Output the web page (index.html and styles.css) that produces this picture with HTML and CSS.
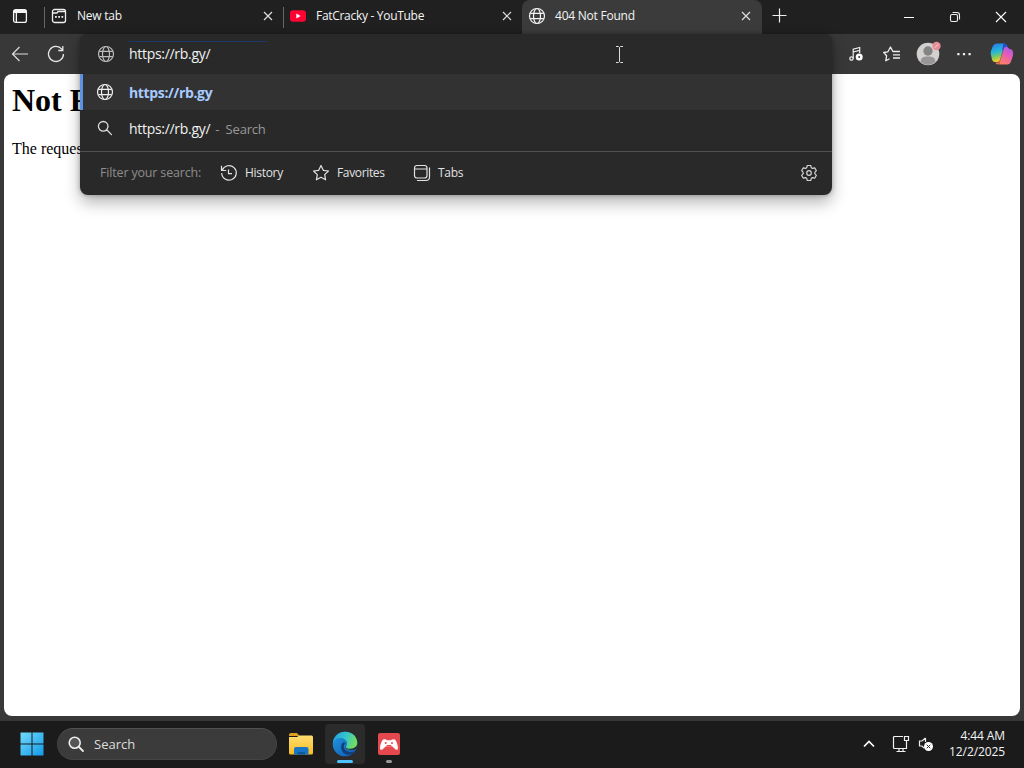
FILE: index.html
```html
<!DOCTYPE html>
<html lang="en">
<head>
<meta charset="utf-8">
<title>404 Not Found</title>
<link rel="stylesheet" href="styles.css">
</head>
<body>
<svg class="defs" width="0" height="0">
  <defs>
    <linearGradient id="win" x1="0" y1="0" x2="1" y2="1"><stop offset="0" stop-color="#72dafa"/><stop offset="1" stop-color="#129ae9"/></linearGradient>
    <linearGradient id="folder" x1="0" y1="0" x2="0" y2="1"><stop offset="0" stop-color="#ffdd70"/><stop offset="1" stop-color="#f6bd24"/></linearGradient>
    <linearGradient id="edgeTop" x1="0" y1="0" x2="1" y2=".3"><stop offset="0" stop-color="#219fda"/><stop offset=".55" stop-color="#35c5ce"/><stop offset="1" stop-color="#6ddd63"/></linearGradient>
    <linearGradient id="edgeLow" x1="0" y1="0" x2="1" y2="1"><stop offset="0" stop-color="#239ce4"/><stop offset="1" stop-color="#0d56ad"/></linearGradient>
    <linearGradient id="copA" x1="0" y1="0" x2=".2" y2="1"><stop offset="0" stop-color="#2579f0"/><stop offset=".5" stop-color="#27b7d6"/><stop offset=".75" stop-color="#79cb62"/><stop offset="1" stop-color="#f1cb28"/></linearGradient>
    <linearGradient id="copB" x1=".7" y1="0" x2=".3" y2="1"><stop offset="0" stop-color="#a65be9"/><stop offset=".45" stop-color="#e65bb8"/><stop offset="1" stop-color="#ff8061"/></linearGradient>
    <symbol id="globe" viewBox="0 0 18 18"><g fill="none" stroke="currentColor" stroke-width="1.2"><circle cx="9" cy="9" r="7.5"/><ellipse cx="9" cy="9" rx="3.5" ry="7.5"/><path d="M2.3 6.3h13.4M2.3 11.7h13.4"/></g></symbol>
    <symbol id="close" viewBox="0 0 10 10"><path d="m1 1 8 8M9 1 1 9" fill="none" stroke="currentColor" stroke-width="1.2"/></symbol>
    <symbol id="search" viewBox="0 0 16 16"><path d="M11 6.3a4.8 4.8 0 1 1-9.6 0 4.8 4.8 0 0 1 9.6 0ZM9.7 9.8l4.8 4.8" fill="none" stroke="currentColor" stroke-width="1.3" stroke-linecap="round"/></symbol>
  </defs>
</svg>

<header class="tab-strip">
  <button class="tab-actions" aria-label="Tab actions"><svg width="16" height="16" viewBox="0 0 16 16"><rect x="1.600" y="1.600" width="12.800" height="12.800" rx="2" fill="none" stroke="#f4f4f4" stroke-width="1.300"/><path d="M2 2h12v3H5v9H3.700V5H2z" fill="#f4f4f4"/></svg></button>
  <div class="tab ruled first">
    <svg class="tab-icon" viewBox="0 0 18 18"><g fill="none" stroke="#eee" stroke-width="1.300"><rect x="2.500" y="2.500" width="13" height="13" rx="2"/><path d="M2.500 6H7l1-1.500h7"/></g><path d="M5 9h1.800v1.800H5zm3.200 0H10v1.800H8.200zm3.200 0h1.800v1.800h-1.800z" fill="#eee"/></svg>
    <span class="tab-title t-new">New tab</span><svg class="tab-close"><use href="#close"/></svg>
  </div>
  <div class="tab ruled first">
    <svg class="tab-icon" viewBox="0 0 18 18"><rect x="1" y="3.200" width="16" height="11.600" rx="3" fill="#ff0334"/><path d="m7.300 6.500 4.400 2.500-4.400 2.500z" fill="#fff"/></svg>
    <span class="tab-title t-yt">FatCracky - YouTube</span><svg class="tab-close"><use href="#close"/></svg>
  </div>
  <div class="tab active">
    <svg class="tab-icon"><use href="#globe"/></svg>
    <span class="tab-title t-404">404 Not Found</span><svg class="tab-close"><use href="#close"/></svg>
  </div>
  <button class="new-tab" aria-label="New tab"><svg width="15" height="15" viewBox="0 0 15 15"><path d="M7.500.5v14M.5 7.500h14" stroke="#eee" stroke-width="1.200"/></svg></button>
  <div class="window-controls">
    <button aria-label="Minimize"><svg width="12" height="12" viewBox="0 0 12 12"><path d="M1 6.500h10" stroke="#fff"/></svg></button>
    <button aria-label="Restore"><svg width="12" height="12" viewBox="0 0 12 12"><g fill="none" stroke="#eee" stroke-width="1.100"><rect x="1.500" y="3.500" width="7" height="7" rx="1.500"/><path d="M3.500 1.500H8q2.500 0 2.500 2.500v4.500"/></g></svg></button>
    <button aria-label="Close"><svg width="12" height="12" viewBox="0 0 12 12"><path d="m1 1 10 10M11 1 1 11" stroke="#fff" stroke-width="1.100"/></svg></button>
  </div>
</header>

<nav class="toolbar">
  <button aria-label="Back"><svg width="18" height="18" viewBox="0 0 18 18"><path d="M17 9H1.500m7-7L1.500 9l7 7" fill="none" stroke="#ddd" stroke-width="1.200"/></svg></button>
  <button aria-label="Reload"><svg width="18" height="18" viewBox="0 0 18 18"><path d="M16.500 9A7.500 7.500 0 1 1 14.800 4.200L15.500 5M15.800 1v4.500h-4.500" fill="none" stroke="#e5e5e5" stroke-width="1.300"/></svg></button>
  <div class="toolbar-end">
    <button aria-label="Media"><svg width="16" height="16" viewBox="0 0 16 16"><g fill="none" stroke="#eee" stroke-width="1.200"><path d="M5.200 12.500V3.200l6.500-1.700V7M5.200 6l6.500-1.700"/><circle cx="3.500" cy="12.500" r="1.700"/></g><circle cx="11.200" cy="11" r="3.500" fill="#fff"/><circle cx="11.200" cy="11" r="1" fill="#383838"/></svg></button>
    <button aria-label="Favorites"><svg width="18" height="18" viewBox="0 0 18 18"><g fill="none" stroke="#eee" stroke-width="1.300" stroke-linejoin="round"><path d="m6.500 13.700-3.700 2 .8-4.900L.7 7.500l4.200-.7L7.500 2l2.400 4.500h7M10 9.800h7M10 13h7"/></g></svg></button>
    <button aria-label="Profile"><svg width="26" height="26" viewBox="0 0 26 26"><circle cx="13" cy="13" r="11.300" fill="#d3d1d0"/><circle cx="13" cy="10" r="4.700" fill="#858383"/><path d="M5.700 21c.2-5 2.600-5.500 7.300-5.500s7.100.5 7.300 5.500Q13 27 5.700 21Z" fill="#989696"/><circle cx="21.500" cy="5" r="4.200" fill="#e78d95"/><path d="m19.800 6.700 3.400-3.400" stroke="#ffd5d7"/></svg></button>
    <button aria-label="Settings and more"><svg width="16" height="16" viewBox="0 0 16 16"><path d="M1.300 7h2.200v2.200H1.300zm5.600 0h2.200v2.200H6.900zm5.600 0h2.200v2.200h-2.200z" fill="#eee"/></svg></button>
    <button aria-label="Copilot"><svg width="24" height="24" viewBox="0 0 24 24"><path d="M7 1.500h8L10 18q-.6 2-2.500 2H4.800Q2.800 20 2 17.500L1 13Q.4 11 1 9l1.700-4.500Q4 1.500 7 1.500Z" fill="url(#copA)"/><path d="M13 1.500h1.500q2.500 0 3 2.500l.8 3h-4q-1.500 0-2 1.500l-.6 1.500L13 4Z" fill="#244fc7"/><path d="M17 22.500H9L14 6q.6-1.500 2.500-1.500l3 2.500q3 .2 3.500 3 .4 2-.2 4L21 19.500q-1 3-4 3Z" fill="url(#copB)"/><path d="M12 13 9.500 21q-.7 1.500-2.500 1.500-1 0-1.500-2h2q1.500 0 2-1.500z" fill="#ed725c"/></svg></button>
  </div>
</nav>

<main class="page">
  <h1>Not Found</h1>
  <p>The requested URL was not found on this server.</p>
</main>

<footer class="taskbar">
  <button class="start" aria-label="Start"><svg width="24" height="24" viewBox="0 0 24 24"><path d="M.5.500h11v11H.5zm12 0h11v11h-11zM.5 12.500h11v11H.5zm12 0h11v11h-11z" fill="url(#win)"/></svg></button>
  <div class="task-search"><svg width="18" height="18" viewBox="0 0 18 18"><circle cx="7.700" cy="7.700" r="5.500" fill="#555" stroke="#eee" stroke-width="1.600"/><path d="m12 12 4 4" stroke="#eee" stroke-width="1.800" stroke-linecap="round"/></svg><span>Search</span></div>
  <div class="apps">
    <div class="app"><svg width="26" height="24" viewBox="0 0 26 24"><path d="M1 3q0-2 2-2h6l2.500 3H1z" fill="#dba020"/><path d="M1 5h8l2-1.500h12.500Q25 3.500 25 5v16q0 1.500-1.500 1.500h-21Q1 22.500 1 21z" fill="url(#folder)"/><path d="M6 22.500V17q0-2 2-2h10.500q2 0 2 2v5.500z" fill="#1875c5"/><path d="M9.500 22.500V20h7.500v2.500z" fill="#0b599b"/></svg></div>
    <div class="app selected"><svg width="26" height="26" viewBox="0 0 26 26"><circle cx="13" cy="13" r="12.300" fill="url(#edgeLow)"/><path d="M1 12C2 5 7 .7 13 .7c7.500 0 12.300 5.300 12.300 11 0 4.500-3.500 7-7.200 7-2.700 0-4.700-1.200-4.300-2.700.2-.8 1.300-1.400 1.300-3.500C15.100 9 11.800 7 8.300 7 4.800 7 2 9 1 12Z" fill="url(#edgeTop)"/><path d="M10.800 11.500C7.500 15 9.300 22 14.500 23.500c4 .9 7.400-.7 9.300-4-5.400 3.500-12 .5-12-4 0-1.800 1-2.500 1.700-3.700z" fill="#123e7b"/><path d="M24.700 17.500Q22 19.300 18.500 19c-3.500-.3-5.300-1.700-4.900-3.500.5 1.500 2.500 2.400 4.900 2.300 2.800-.1 5.200-1.300 6.200-3.800z" fill="#2b2b2b"/></svg><i class="run-wide"></i></div>
    <div class="app"><svg width="22" height="22" viewBox="0 0 22 22"><rect width="22" height="22" rx="2" fill="#e5484d"/><path d="M5 6.500q3-.7 4 .8h4q1-1.500 4-.8c2 2.500 3.500 7.500 2.700 10-2 1-3.700-1.500-5.200-3h-7c-1.500 1.500-3.200 4-5.200 3-.8-2.500.7-7.500 2.700-10Z" fill="#fff"/><circle cx="7.700" cy="10" r="1" fill="#e5484d"/><circle cx="14" cy="10" r="1" fill="#e5484d"/><path d="M8 13.500h6L13 12H9z" fill="#e5484d"/></svg><i class="run-dot"></i></div>
  </div>
  <div class="tray">
    <svg width="12" height="8" viewBox="0 0 12 8"><path d="m1 6.500 5-5 5 5" fill="none" stroke="#fff" stroke-width="1.700"/></svg>
    <svg class="network" width="18" height="18" viewBox="0 0 18 18"><g fill="none" stroke="#f1f1f1" stroke-width="1.200"><path d="M11 1.500H2.500q-1 0-1 1v10q0 1 1 1h12V9M7 13.500v3m4-3v3M4.500 16.500h9"/><path d="M12.500 1.500h4v4h-4zM14.500 5.500V9"/></g></svg>
    <svg class="volume" width="16" height="16" viewBox="0 0 16 16"><path d="M7.500 2v4M7.500 2 4 5H1.500v5H4l2 2" fill="none" stroke="#eee" stroke-width="1.200"/><circle cx="10.500" cy="10.500" r="4.500" fill="#fff"/><path d="m8.700 8.700 3.600 3.600m0-3.600-3.600 3.600" stroke="#333"/></svg>
    <div class="clock"><span class="time">4:44 AM</span><span class="date">12/2/2025</span></div>
  </div>
</footer>

<section class="omnibox">
  <div class="address"><svg class="globe"><use href="#globe"/></svg><span class="url">https://rb.gy/</span></div>
  <div class="suggestion chosen"><svg class="globe"><use href="#globe"/></svg><b>https://rb.gy</b></div>
  <div class="suggestion"><svg class="magnifier"><use href="#search"/></svg><span class="url">https://rb.gy/</span><span class="hint">- &nbsp;Search</span></div>
  <div class="filters">
    <span class="filter-label">Filter your search:</span>
    <div class="filter history"><svg width="18" height="18" viewBox="0 0 18 18"><path d="M2.200 6.200A7.300 7.300 0 1 1 1.700 9M1.500 1.800v4.700h4.700M8.500 5.500v4.200h3.500" fill="none" stroke="currentColor" stroke-width="1.200"/></svg><span>History</span></div>
    <div class="filter favorites"><svg width="18" height="18" viewBox="0 0 18 18"><path d="m9 1.500 2.300 4.800 5.200.7-3.800 3.600.9 5.200L9 13.300l-4.600 2.500.9-5.200L1.500 7l5.200-.7z" fill="none" stroke="currentColor" stroke-width="1.200" stroke-linejoin="round"/></svg><span>Favorites</span></div>
    <div class="filter tabs"><svg width="18" height="18" viewBox="0 0 18 18"><g fill="none" stroke="currentColor" stroke-width="1.200"><rect x="1.500" y="1.500" width="12.500" height="12.500" rx="2.500"/><path d="M1.500 5H14m2.500-1.500V13q0 3.500-3.500 3.500H4"/></g></svg><span>Tabs</span></div>
    <svg class="gear" width="18" height="18" viewBox="0 0 18 18"><g fill="none" stroke="#d5d5d5" stroke-width="1.200" stroke-linejoin="round"><path d="m7.300 1.500-.6 2.200-1.200.7-2.200-.6L1.600 6.700 3.200 8.300v1.400l-1.600 1.600 1.700 2.900 2.200-.6 1.200.7.600 2.200h3.400l.6-2.200 1.200-.7 2.200.6 1.700-2.900-1.600-1.600V8.300l1.600-1.600-1.700-2.900-2.200.6-1.200-.7-.6-2.200z"/><circle cx="9" cy="9" r="2.300"/></g></svg>
  </div>
</section>
<svg class="text-cursor" width="9" height="17" viewBox="0 0 9 17"><path d="M1 .5h2.500l1 1 1-1H8M4.500 1.500v14M1 16.500h2.500l1-1 1 1H8" fill="none" stroke="#ddd"/></svg>
</body>
</html>
```
FILE: styles.css
```css
* { box-sizing: border-box; }
body { margin: 0; width: 1024px; height: 768px; overflow: hidden; display: flex; flex-direction: column; background: #383838; color: #f4f4f4; font: 12px/16px "Open Sans", "Noto Sans", sans-serif; }
svg { display: block; flex: none; }
.defs { position: absolute; }
button { border: 0; padding: 0; background: none; display: flex; align-items: center; justify-content: center; flex: none; }
span, b { white-space: nowrap; }

.tab-strip { flex: 0 0 34px; display: flex; background: #202020; }
.tab-actions { width: 40px; height: 32px; }
.tab { width: 239px; height: 34px; padding: 0 10px 2px 7px; display: flex; align-items: center; }
.tab-actions + .tab { margin-left: 4px; }
.ruled { border-left: 1px solid #555; border-image: linear-gradient(transparent 8px, #666 8px 27px, transparent 27px) 1; padding-left: 5px; }
.tab-icon { width: 18px; height: 18px; margin-right: 9px; }
.tab-close { width: 10px; height: 10px; margin-left: auto; color: #ddd; }
.active { width: 240px; background: #3b3b3b; border-radius: 8px 8px 0 0; padding-left: 6px; padding-right: 11px; }
.t-new { letter-spacing: -.25px; }
.t-yt { letter-spacing: -.3px; }
.t-404 { letter-spacing: -.23px; }
.new-tab { width: 34px; height: 31px; }
.window-controls { margin-left: auto; display: flex; height: 34px; }
.window-controls button { width: 46px; }

.toolbar { flex: 0 0 40px; display: flex; align-items: center; padding-left: 2px; }
.toolbar > button { width: 36px; height: 40px; }
.toolbar-end { margin-left: auto; display: flex; align-items: center; padding-right: 4px; }
.toolbar-end button { width: 36px; height: 40px; }
.toolbar-end button:last-child { margin-left: 2px; }

.page { flex: 0 0 642px; margin: 0 4px; padding: 8px; overflow: hidden; background: #fff; border-radius: 8px; color: #000; font: 16px "Liberation Serif", serif; }
.page h1 { margin: 0 0 21px; font-size: 32px; line-height: 37px; }
.page p { margin: 0; line-height: 18px; }

.taskbar { margin-top: 5px; flex: 1; display: flex; align-items: center; background: #1b1b1b; padding: 0 19px 1px 20px; }
.start { width: 24px; }
.task-search { width: 220px; height: 32px; margin-left: 13px; padding-left: 9px; border-radius: 16px; border: 1px solid #444; border-top-color: #505050; background: #3b3b3b; display: flex; align-items: center; gap: 9px; color: #ddd; font-size: 13px; }
.apps { display: flex; margin-left: 4px; gap: 4px; }
.app { width: 40px; height: 40px; border-radius: 4px; display: flex; align-items: center; justify-content: center; position: relative; }
.selected { background: #2b2b2b; }
.app i { position: absolute; bottom: 1px; height: 3px; border-radius: 2px; }
.run-wide { width: 16px; background: #4cc2ff; }
.run-dot { width: 6px; background: #999; }
.tray { margin-left: auto; display: flex; align-items: center; }
.network { margin-left: 17px; }
.volume { margin-left: 8px; }
.clock { width: 71px; display: flex; flex-direction: column; align-items: flex-end; font-size: 12px; letter-spacing: -.1px; }

.omnibox { position: absolute; left: 80px; top: 34px; width: 752px; height: 161px; border-radius: 8px; overflow: hidden; background: #292929; box-shadow: 0 8px 16px rgba(0,0,0,.28), 0 0 5px rgba(0,0,0,.3); font-size: 14px; line-height: 18px; }
.address { height: 40px; padding-left: 17px; display: flex; align-items: center; gap: 14px; }
.address .url { padding: 11px 57px 11px 0; background: linear-gradient(#193767, #193767) 0 7px / 100% 1px no-repeat; }
.globe { width: 18px; height: 18px; color: #bbb; }
.suggestion { height: 36px; display: flex; align-items: center; padding-left: 16px; }
.suggestion span, .suggestion b { padding-top: 2px; }
.chosen { background: #323232; box-shadow: inset 3px 0 #5c92e6; color: #a8caff; }
.chosen .globe { color: #eee; margin-right: 15px; }
.chosen b { letter-spacing: -.35px; }
.url { color: #f1f1f1; letter-spacing: -.3px; }
.magnifier { width: 16px; height: 16px; margin: 0 16px 0 1px; color: #ddd; }
.hint { color: #999; margin-left: 5px; font-size: 13px; letter-spacing: -.2px; }
.filters { margin-top: 5px; height: 43px; display: flex; align-items: center; border-top: 1px solid #505050; padding: 0 14px 0 20px; font-size: 12px; }
.filter-label { width: 120px; color: #8d8d8d; font-size: 12.5px; letter-spacing: -.17px; }
.filter { display: flex; align-items: center; gap: 7px; color: #e2e2e2; letter-spacing: -.3px; }
.filter span { padding-bottom: 1px; }
.history { width: 92px; }
.favorites { width: 101px; letter-spacing: -.35px; }
.gear { margin-left: auto; }
.text-cursor { position: absolute; left: 615px; top: 46px; }
```
